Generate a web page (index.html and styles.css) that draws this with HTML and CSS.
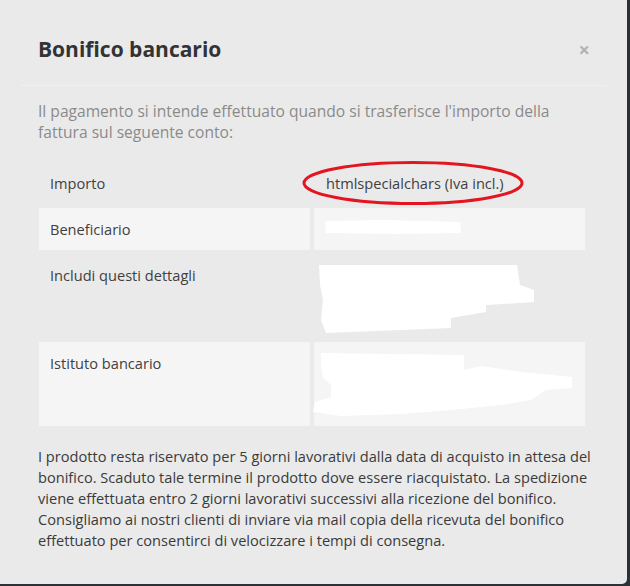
FILE: index.html
```html
<!DOCTYPE html>
<html lang="it">
<head>
  <meta charset="UTF-8">
  <meta name="viewport" content="width=device-width, initial-scale=1.0">
  <title>Bonifico bancario</title>
  <link rel="stylesheet" href="styles.css">
</head>
<body>
<div class="modal">
  <div class="modal-dialog">
    <div class="modal-header">
      <button class="close" type="button">&times;</button>
      <h4 class="modal-title">Bonifico bancario</h4>
    </div>
    <div class="modal-body">
      <p class="intro">Il pagamento si intende effettuato quando si trasferisce l'importo della fattura sul seguente conto:</p>
      <table class="bank-table">
        <tr>
          <td>Importo</td>
          <td>htmlspecialchars (Iva incl.)</td>
        </tr>
        <tr class="striped">
          <td>Beneficiario</td>
          <td>
            <svg class="redact" width="136" height="20" viewBox="0 0 136 20">
              <path d="M-1 2 L60 1 L134 3 L135 14 L70 15 L0 14 Z" fill="#fff"/>
            </svg>
          </td>
        </tr>
        <tr>
          <td>Includi questi dettagli</td>
          <td>
            <svg class="redact" width="247" height="62" viewBox="0 0 247 62">
              <path d="M-7 0 L191 0 L194 20 L208 25 L208 37 L160 40 L160 47 L125 53 L125 63 L75 65 L0 68 L-5 55 L-3 35 L-6 20 Z" fill="#fff"/>
            </svg>
          </td>
        </tr>
        <tr class="striped">
          <td>Istituto bancario</td>
          <td>
            <svg class="redact" width="247" height="62" viewBox="0 0 247 62">
              <path d="M-5 0 L138 2 L138 17 L155 13 L195 19 L246 24 L246 35 L220 37 L205 47 L175 52 L125 57 L75 61 L15 63 L-13 59 L-11 49 L5 44 L5 32 L-3 25 L-5 12 Z" fill="#fff"/>
            </svg>
          </td>
        </tr>
      </table>
      <p class="note">I prodotto resta riservato per 5 giorni lavorativi dalla data di acquisto in attesa del bonifico. Scaduto tale termine il prodotto dove essere riacquistato. La spedizione viene effettuata entro 2 giorni lavorativi successivi alla ricezione del bonifico. Consigliamo ai nostri clienti di inviare via mail copia della ricevuta del bonifico effettuato per consentirci di velocizzare i tempi di consegna.</p>
    </div>
  </div>
  <!-- red ring drawn over the screenshot -->
  <svg class="circle-mark" width="230" height="50" viewBox="0 0 230 50">
    <ellipse cx="112" cy="24" rx="109" ry="20.5" fill="none" stroke="#e3161f" stroke-width="3"/>
  </svg>
</div>
</body>
</html>
```

FILE: styles.css
```css
body {
  margin: 0;
  padding: 0;
  background: #2c3136;
  font-family: "Open Sans", sans-serif;
  font-size: 14.6px;
  color: #3d3d3d;
}
.modal {
  position: relative;
  width: 627px;
  background: #eaeaea;
  border-radius: 0 0 5px 0;
}
.modal-dialog {
  padding: 20px 20px 20px 21px;
}
.modal-header {
  padding: 18px 17px 24px 17px;
  border-bottom: 1px solid #f0f0f0;
}
.modal-title {
  margin: 0;
  font-size: 21px;
  line-height: 23px;
  font-weight: bold;
  color: #333;
}
.close {
  float: right;
  margin-top: 0;
  padding: 0;
  background: none;
  border: none;
  font-family: "Open Sans", sans-serif;
  font-size: 20px;
  font-weight: bold;
  line-height: 23px;
  color: #b2b2b2;
  cursor: pointer;
}
.modal-body {
  padding: 15px 17px 13px 17px;
}
.intro {
  max-width: 540px;
  margin: 0 0 15px;
  font-size: 15.6px;
  line-height: 21px;
  color: #8a8a8a;
}
.bank-table {
  width: 554px;
  margin-left: -3px;
  border-collapse: separate;
  border-spacing: 4px;
  table-layout: fixed;
}
.bank-table td {
  padding: 11px 12px 11px 11px;
  line-height: 20px;
  vertical-align: top;
  color: #3f3f3f;
}
.bank-table td + td {
  padding-left: 12px;
}
.striped td {
  background: #f5f5f5;
}
.redact {
  display: block;
  overflow: visible;
}
.note {
  width: 578px;
  margin: 16px 0 0;
  line-height: 21px;
  color: #3a3a3a;
}
.circle-mark {
  position: absolute;
  left: 301px;
  top: 159px;
}
```
